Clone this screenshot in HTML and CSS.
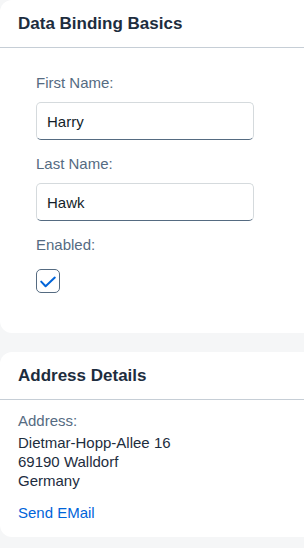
FILE: index.html
```html
<!DOCTYPE html>
<html lang="en">
<head>
    <meta charset="UTF-8">
    <meta name="viewport" content="width=device-width, initial-scale=1.0">
    <title>Data Binding</title>
    <link rel="stylesheet" href="styles.css">
</head>
<body>
    <div class="panel">
        <div class="panel-head">Data Binding Basics</div>
        <div class="form">
            <label class="label" for="first">First Name:</label>
            <input class="field" id="first" type="text" value="Harry">
            <label class="label" for="last">Last Name:</label>
            <input class="field" id="last" type="text" value="Hawk">
            <div class="label">Enabled:</div>
            <div class="check">
                <svg width="24" height="24" viewBox="0 0 24 24">
                    <path d="M5.2 12.6 L9.6 17.2 L18.8 8.6" fill="none" stroke="#0064d9" stroke-width="2" stroke-linecap="round" stroke-linejoin="round"/>
                </svg>
            </div>
        </div>
    </div>

    <div class="panel">
        <div class="panel-head">Address Details</div>
        <div class="address">
            <div class="label">Address:</div>
            <div class="lines">
                Dietmar-Hopp-Allee 16<br>
                69190 Walldorf<br>
                Germany
            </div>
            <a class="link" href="#">Send EMail</a>
        </div>
    </div>
</body>
</html>
```

FILE: styles.css
```css
body {
    margin: 0;
    background-color: #f5f6f7;
    font-family: "Liberation Sans", Arial, sans-serif;
    font-size: 15px;
    line-height: 18px;
    color: #1d2d3e;
}
.panel {
    background-color: #fff;
    border-radius: 12px 0 0 12px;
    margin-bottom: 19px;
}
.panel-head {
    height: 47px;
    line-height: 48px;
    padding-left: 18px;
    font-size: 17px;
    font-weight: bold;
    color: #1d2d3e;
    border-bottom: 1px solid #c6ced6;
}
.form {
    display: flex;
    flex-direction: column;
    align-items: flex-start;
    padding: 26px 0 40px 36px;
}
.label {
    color: #556b82;
    display: block;
}
.field {
    box-sizing: border-box;
    width: 218px;
    height: 38px;
    margin: 10px 0 15px;
    padding: 0 10px;
    border: 1px solid #d5dadd;
    border-bottom-color: #556b81;
    border-radius: 5px;
    font-family: inherit;
    font-size: 15px;
    color: #131e29;
    background: #fff;
    outline: none;
}
.check {
    box-sizing: border-box;
    width: 24px;
    height: 24px;
    margin-top: 15px;
    border: 1px solid #556b81;
    border-radius: 5px;
    display: flex;
}
.check svg {
    margin: -1px;
}
.address {
    padding: 12px 0 15px 18px;
}
.lines {
    margin-top: 3px;
    line-height: 19px;
}
.link {
    display: inline-block;
    margin-top: 14px;
    color: #0064d9;
    text-decoration: none;
}
```
